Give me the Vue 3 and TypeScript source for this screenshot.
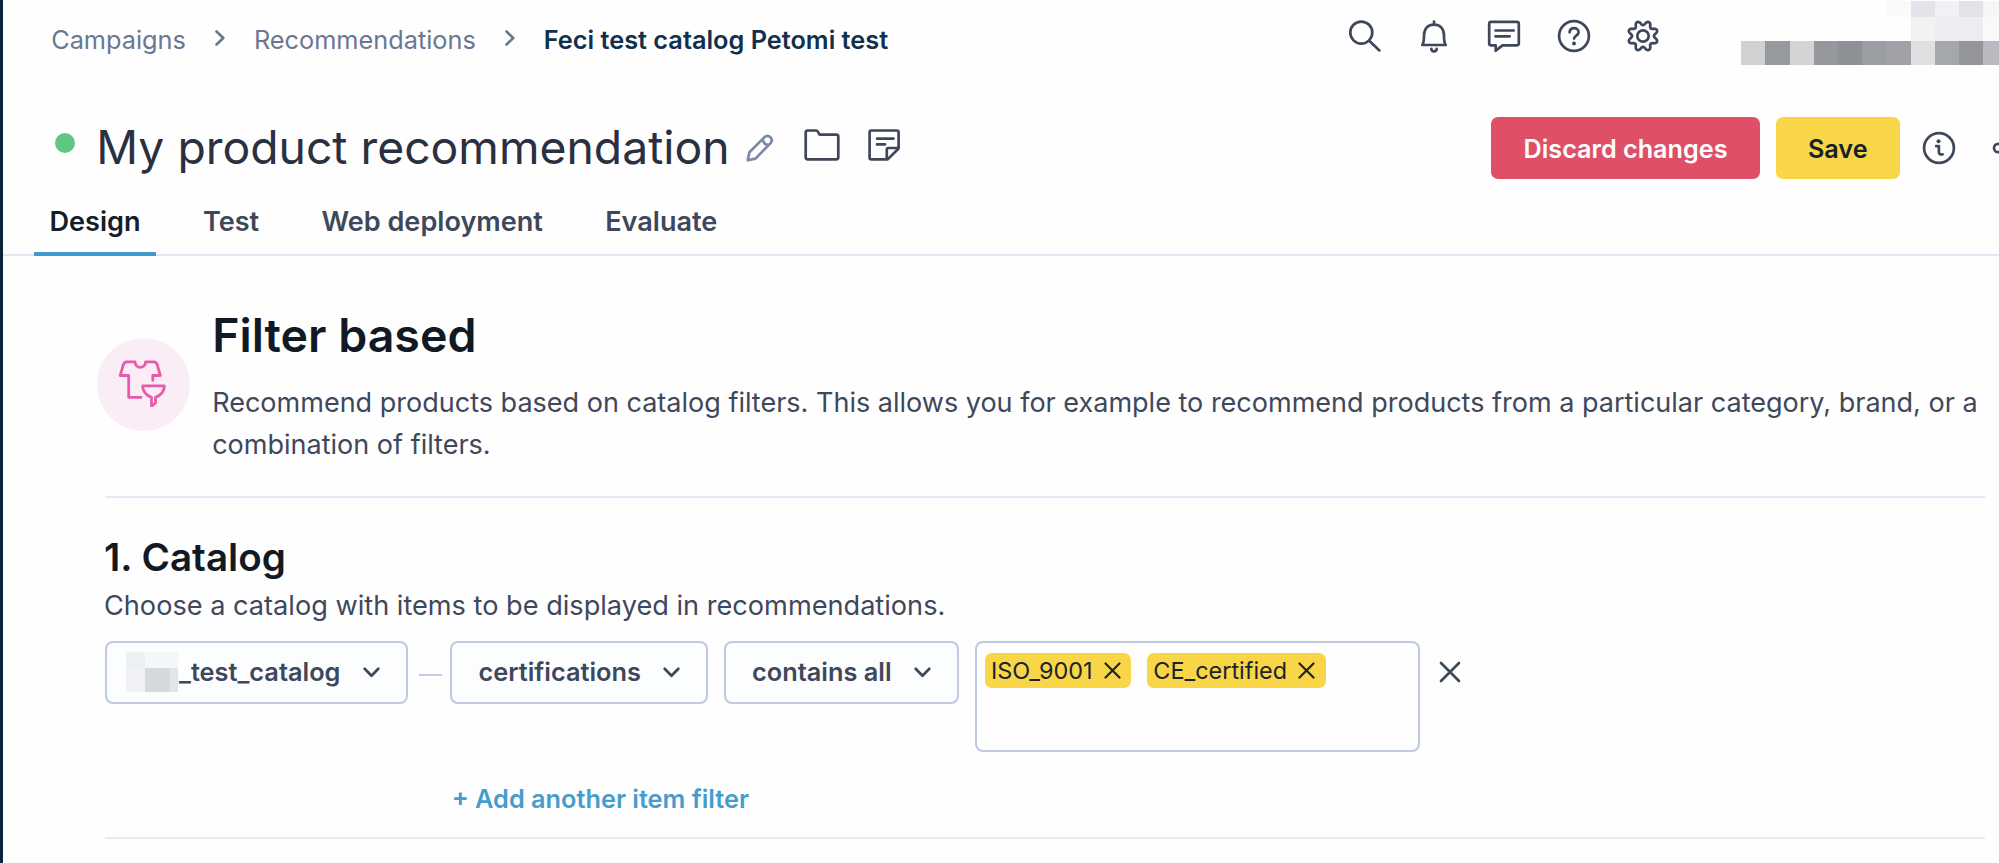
<script setup lang="ts">
import { ref } from 'vue'

interface Tag {
  id: number
  label: string
}

const tabs: string[] = ['Design', 'Test', 'Web deployment', 'Evaluate']
const activeTab = ref<string>('Design')

const tags = ref<Tag[]>([
  { id: 1, label: 'ISO_9001' },
  { id: 2, label: 'CE_certified' },
])

function removeTag(id: number): void {
  tags.value = tags.value.filter((tag) => tag.id !== id)
}

// Outline of the settings gear: eight soft teeth around a 34px box
function gearOutline(): string {
  const points: string[] = []
  for (let deg = 0; deg < 360; deg += 3) {
    const a = (deg * Math.PI) / 180
    const wave = Math.cos(8 * a)
    const r = 13 - 2.1 * Math.sign(wave) * Math.pow(Math.abs(wave), 0.75)
    points.push(`${(17 + r * Math.sin(a)).toFixed(2)} ${(17 - r * Math.cos(a)).toFixed(2)}`)
  }
  return `M${points.join('L')}Z`
}
const gearPath = gearOutline()

// Redacted account block, row by row
const accountCells: string[] = [
  '', '', '', '', '', '', '#f9fafa', '#e3e4e9', '#f0f1f4', '#e2e3e7', '#f5f6f8',
  '', '', '', '', '', '', '', '#f2f2f3', '#eeeef0', '#ecedef', '#f9f9f9',
  '#d0d1d3', '#969a9f', '#d3d4d6', '#96989e', '#8d9195', '#9a9da2', '#a0a2a8', '#dfe0e2', '#a4a8ad', '#93959b', '#b9babf',
]
</script>

<template>
  <div class="page">
    <header class="topbar">
      <nav class="breadcrumb">
        <a class="crumb">Campaigns</a>
        <svg class="crumb-arrow" viewBox="0 0 10 16"><path d="M1.5 1.5 8.3 8l-6.8 6.5" /></svg>
        <a class="crumb">Recommendations</a>
        <svg class="crumb-arrow" viewBox="0 0 10 16"><path d="M1.5 1.5 8.3 8l-6.8 6.5" /></svg>
        <span class="crumb current">Feci test catalog Petomi test</span>
      </nav>
      <div class="top-icons">
        <svg class="icon" viewBox="0 0 34 34"><circle cx="13.3" cy="13.6" r="11" /><path d="m21 21.6 10.4 9.8" /></svg>
        <svg class="icon" viewBox="0 0 34 34">
          <path d="M17 2.5v3M5.300 26c1.600-2.200 1.700-4.700 1.700-9.500C7 9.300 11.200 5.600 17 5.600s10 3.700 10 10.900c0 4.800.1 7.300 1.700 9.500ZM14.300 29.800c.4 3.400 5 3.400 5.400 0" />
        </svg>
        <svg class="icon" viewBox="0 0 34 34">
          <path d="M4 2.800h26a1.800 1.800 0 0 1 1.800 1.800v20a1.800 1.800 0 0 1-1.800 1.800H15.500L8.700 31.700v-5.300H4a1.800 1.800 0 0 1-1.800-1.800v-20A1.800 1.800 0 0 1 4 2.800ZM8.500 11.500h18.200M8.500 17.300h14.200" />
        </svg>
        <svg class="icon" viewBox="0 0 34 34">
          <circle cx="17" cy="17" r="14.900" /><path d="M12.600 13.300c0-5.700 9-5.300 9-.1 0 3.600-4.500 3.100-4.500 6.400" /><circle class="dot" cx="17" cy="24.400" r="2" />
        </svg>
        <svg class="icon" viewBox="0 0 34 34"><circle cx="17" cy="17" r="5.700" /><path :d="gearPath" /></svg>
      </div>
      <div class="account">
        <span v-for="(cell, i) in accountCells" :key="i" :style="{ background: cell }"></span>
      </div>
    </header>

    <section class="title-row">
      <span class="status"></span>
      <h1>My product recommendation</h1>
      <svg class="icon pencil" viewBox="0 0 28 28">
        <path d="m1.700 26.300 1.700-8.100L18.600 3.100c3.900-3.400 9.400 2 6 6L9.500 24.600ZM16.800 4.900c.2 3.500 2.500 5.900 6 6" />
      </svg>
      <svg class="icon folder" viewBox="0 0 36 32">
        <path d="M3.800 1.500h8.400c.8 0 1.200.3 1.500.9l1.900 3.300h16.600c1.300 0 2.100.8 2.100 2v20.600c0 1.300-.8 2.100-2.100 2.100H3.800c-1.300 0-2.100-.8-2.100-2.100V3.500c0-1.200.8-2 2.100-2Z" />
      </svg>
      <svg class="icon note" viewBox="0 0 32 32">
        <path d="M3.300 1.500h25.600c1.100 0 1.700.6 1.700 1.700v16.300L19.700 30.400H3.300c-1.100 0-1.700-.6-1.700-1.700V3.200c0-1.100.6-1.700 1.700-1.700ZM9 9.600h16.500M9 15.400h8M18.800 30V20.400c0-.9.500-1.400 1.400-1.400h10" />
      </svg>
      <div class="actions">
        <button class="btn discard">Discard changes</button>
        <button class="btn save">Save</button>
        <svg class="icon info" viewBox="0 0 34 34">
          <circle cx="17" cy="17" r="14.900" /><circle class="dot" cx="16.500" cy="10.300" r="2" /><path d="M14.200 15.200h2.700v6.100c0 1.600 1 2.300 3.700 2.100" />
        </svg>
        <svg class="icon share" viewBox="0 0 34 34">
          <circle cx="6.200" cy="17" r="4.200" /><circle cx="27" cy="6" r="4.200" /><circle cx="27" cy="28" r="4.200" /><path d="m10 15 13-7M10 19l13 7" />
        </svg>
      </div>
    </section>

    <nav class="tabs">
      <a v-for="tab in tabs" :key="tab" class="tab" :class="{ active: tab === activeTab }" @click="activeTab = tab">{{ tab }}</a>
    </nav>

    <main class="content">
      <section class="intro">
        <div class="badge">
          <svg viewBox="0 0 48 48">
            <path d="M10.700 38.300h12.300M10.700 38.300V16.500H2.200L5.300 5.900Q6.200 2.800 9 2.800H17c.4 7.300 10.200 7.300 10.600 0h8Q38.400 2.800 39.300 5.900L42.300 16.500H34.800v4.800M24.700 26.800h21.600c.5 5-3.800 9.700-8.800 11.600V44l-4 3.200v-8.800c-5-1.900-9.300-6.600-8.800-11.600Z" />
          </svg>
        </div>
        <div class="intro-text">
          <h2>Filter based</h2>
          <p>Recommend products based on catalog filters. This allows you for example to recommend products from a particular category, brand, or a<br />combination of filters.</p>
        </div>
      </section>

      <section class="catalog">
        <h3>1. Catalog</h3>
        <p class="hint">Choose a catalog with items to be displayed in recommendations.</p>
        <div class="filter-row">
          <button class="select catalog-select">
            <span class="masked"><i></i><i></i><i></i><i></i><i></i><i></i></span>
            <span>_test_catalog</span>
            <svg class="caret" viewBox="0 0 17 11"><path d="m1.700 1.700 6.800 7 6.800-7" /></svg>
          </button>
          <span class="dash"></span>
          <button class="select attribute">
            <span>certifications</span>
            <svg class="caret" viewBox="0 0 17 11"><path d="m1.700 1.700 6.800 7 6.800-7" /></svg>
          </button>
          <button class="select operator">
            <span>contains all</span>
            <svg class="caret" viewBox="0 0 17 11"><path d="m1.700 1.700 6.800 7 6.800-7" /></svg>
          </button>
          <div class="tag-input">
            <span v-for="tag in tags" :key="tag.id" class="tag">
              {{ tag.label }}
              <svg class="tag-x" viewBox="0 0 17 17" @click="removeTag(tag.id)"><path d="m1.500 1.500 14 14M15.500 1.500l-14 14" /></svg>
            </span>
          </div>
          <svg class="row-x" viewBox="0 0 22 22"><path d="m2 2 18 18M20 2 2 20" /></svg>
        </div>
        <a class="add">+ Add another item filter</a>
      </section>
    </main>
  </div>
</template>

<style>
body {
  margin: 0;
  overflow: hidden;
}
</style>

<style scoped>
.page {
  box-sizing: border-box;
  width: 1999px;
  height: 863px;
  overflow: hidden;
  border-left: 3px solid #0c2340;
  background: #fefefe;
  color: #3f485b;
  font-family: Inter, "Liberation Sans", sans-serif;
}

h1, h2, h3, p {
  margin: 0;
}

svg {
  display: block;
  flex: none;
  fill: none;
  stroke: currentColor;
  stroke-linecap: round;
  stroke-linejoin: round;
}

.icon {
  width: 34px;
  height: 34px;
  stroke-width: 2.700;
}

.icon .dot {
  fill: currentColor;
  stroke: none;
}

.topbar {
  display: flex;
  align-items: center;
  height: 71px;
}

.breadcrumb {
  box-sizing: border-box;
  display: flex;
  flex: none;
  align-items: center;
  gap: 29px;
  width: 1344.500px;
  margin-top: 8.600px;
  padding-left: 48.200px;
  font-size: 25.300px;
  line-height: 32px;
  color: #6a7793;
  white-space: nowrap;
}

.breadcrumb .current {
  color: #12304c;
  font-weight: 600;
}

.crumb-arrow {
  width: 10px;
  height: 16px;
  margin-top: -4px;
  stroke-width: 2.600;
}

.top-icons {
  display: flex;
  flex: none;
  gap: 35.700px;
}

.account {
  display: grid;
  flex: none;
  grid-template-columns: repeat(11, 24.200px);
  grid-template-rows: 15.500px 24px 24.500px;
  align-self: flex-start;
  margin: 1px 0 0 81px;
}

.title-row {
  display: flex;
  align-items: center;
  height: 62px;
  margin-top: 46px;
  padding-left: 52px;
}

.status {
  width: 20px;
  height: 20px;
  margin: -10px 21.300px 0 0;
  border-radius: 50%;
  background: #5ec783;
}

h1 {
  margin-top: -3px;
  font-size: 46.300px;
  font-weight: 400;
  line-height: 56px;
  color: #2a3040;
  white-space: nowrap;
}

.pencil {
  width: 28px;
  height: 28px;
  margin-left: 16px;
  color: #7c89a6;
}

.folder {
  width: 36px;
  height: 32px;
  margin: -6px 0 0 30.500px;
}

.note {
  width: 32px;
  height: 32px;
  margin: -6px 0 0 28px;
}

.actions {
  display: flex;
  align-items: center;
  margin-left: auto;
  width: 508px;
}

.btn {
  flex: none;
  height: 62px;
  padding: 2px 0 0;
  border: 0;
  border-radius: 7px;
  font: 600 25.200px/60px Inter, "Liberation Sans", sans-serif;
}

.discard {
  width: 269px;
  background: #df5068;
  color: #fff;
}

.save {
  width: 124.500px;
  margin-left: 15.500px;
  background: #f8d648;
  color: #16202a;
}

.info {
  margin-left: 22px;
}

.share {
  margin-left: 36px;
}

.tabs {
  box-sizing: border-box;
  display: flex;
  gap: 31.300px;
  height: 77px;
  padding: 0 0 0 31px;
  border-bottom: 2px solid #e1e7f3;
}

.tab {
  box-sizing: border-box;
  height: 77px;
  padding: 25px 15.500px 0;
  border-bottom: 4px solid transparent;
  font-size: 27.100px;
  font-weight: 600;
  line-height: 36px;
  white-space: nowrap;
}

.tab.active {
  border-color: #4299ca;
  color: #141d28;
}

.content {
  padding-left: 94px;
}

.intro {
  display: flex;
  height: 240px;
}

.badge {
  display: flex;
  align-items: center;
  justify-content: center;
  flex: none;
  width: 93px;
  height: 93px;
  margin-top: 81.500px;
  border-radius: 50%;
  background: #fbedf6;
  color: #e85bab;
}

.badge svg {
  width: 48px;
  height: 48px;
  margin: -3px 3px 0 0;
  stroke-width: 2.800;
}

.intro-text {
  margin: 50.500px 0 0 22.200px;
}

h2 {
  margin-bottom: 19px;
  font-size: 46.500px;
  font-weight: 600;
  line-height: 56px;
  color: #111a24;
}

.intro-text p {
  font-size: 27.030px;
  line-height: 42.500px;
  white-space: nowrap;
}

.catalog {
  box-sizing: border-box;
  width: 1880px;
  height: 343px;
  margin-left: 8px;
  padding-top: 36px;
  border: solid #e3e9f5;
  border-width: 2px 0;
}

h3 {
  margin-left: -1px;
  font-size: 38.600px;
  font-weight: 600;
  line-height: 46px;
  color: #111a24;
}

.hint {
  margin: 8px 0 17px -1px;
  font-size: 27.150px;
  line-height: 36px;
}

.filter-row {
  display: flex;
  align-items: flex-start;
}

.select {
  box-sizing: border-box;
  display: flex;
  align-items: center;
  height: 62.500px;
  padding: 0 26.500px;
  border: 2px solid #bfc9e1;
  border-radius: 8px;
  background: #fcfdff;
  color: inherit;
  font: 600 25.350px/56px Inter, "Liberation Sans", sans-serif;
  white-space: nowrap;
}

.catalog-select {
  width: 303px;
  padding-left: 19px;
}

.attribute {
  width: 258px;
}

.operator {
  width: 235.500px;
  margin-left: 15.500px;
}

.caret {
  width: 17px;
  height: 11px;
  margin-left: 22.200px;
  stroke-width: 2.700;
}

.masked {
  display: grid;
  grid-template-columns: 19px 25px 8px;
  grid-template-rows: 16px 24px;
  margin-right: 1px;
}

.masked i {
  background: #f0f1f4;
}

.masked i:nth-child(1) {
  background: #edf0f2;
}

.masked i:nth-child(2), .masked i:nth-child(3) {
  background: #f4f6f8;
}

.masked i:nth-child(5) {
  background: #d5d8dc;
}

.masked i:nth-child(6) {
  background: #e2e4e9;
}

.dash {
  width: 23px;
  height: 2px;
  margin: 33px 8px 0 11px;
  background: #c3cde3;
}

.tag-input {
  box-sizing: border-box;
  display: flex;
  align-items: flex-start;
  gap: 15.500px;
  width: 445px;
  height: 110.500px;
  margin-left: 15.500px;
  padding: 10px 8px;
  border: 2px solid #bfc9e1;
  border-radius: 8px;
}

.tag {
  display: flex;
  align-items: center;
  height: 35px;
  padding: 0 10.500px 0 6.500px;
  border-radius: 7px;
  background: #f8d648;
  color: #1b242b;
  font-size: 23.450px;
  white-space: nowrap;
}

.tag-x {
  width: 17px;
  height: 17px;
  margin-left: 11.200px;
  stroke-width: 2.200;
}

.row-x {
  width: 22px;
  height: 22px;
  margin: 20px 0 0 19.500px;
  stroke-width: 2.700;
}

.add {
  display: block;
  margin: 29px 0 0 346.700px;
  font-size: 25.300px;
  font-weight: 600;
  line-height: 36px;
  color: #469dcd;
}
</style>
